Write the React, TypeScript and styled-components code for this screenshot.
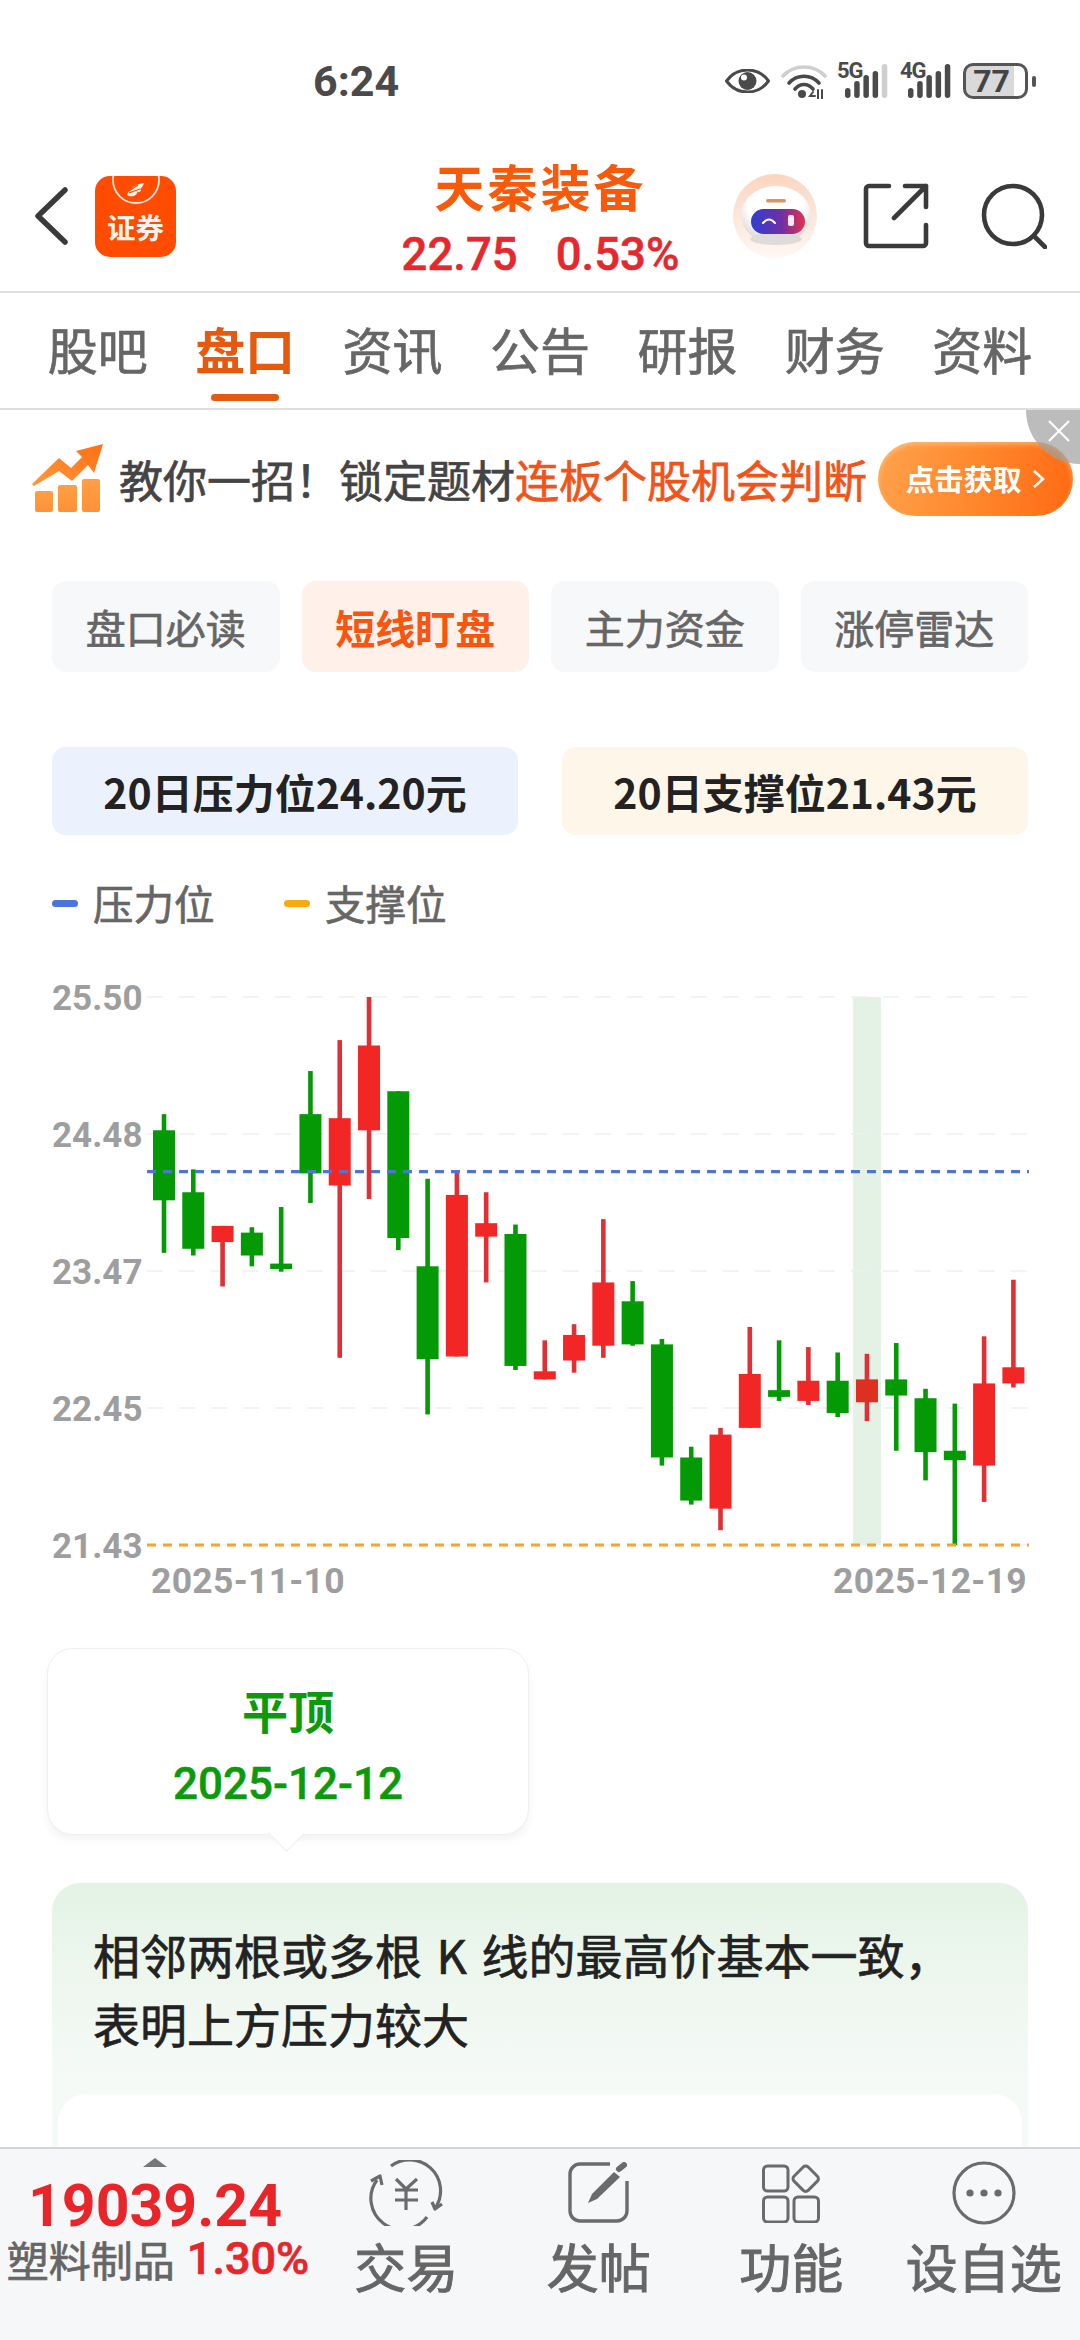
import styled, { createGlobalStyle, css } from "styled-components";

const CJK = `"Noto Sans CJK SC", "Noto Sans", sans-serif`;
const NUM = `Roboto, "Noto Sans CJK SC", sans-serif`;

// the CJK family only ships regular and bold, this thickens regular a little
const medium = css`
  font-weight: 400;
  -webkit-text-stroke: 0.7px currentColor;
`;

const GlobalStyle = createGlobalStyle`
  html, body {
    margin: 0;
    padding: 0;
    background: #fff;
    font-family: ${CJK};
  }
  * {
    box-sizing: border-box;
  }
`;

const Page = styled.div`
  width: 1080px;
  height: 2340px;
  display: flex;
  flex-direction: column;
  overflow: hidden;
  background: #fff;
`;
const StatusBar = styled.div`
  height: 130px;
  flex: none;
  padding: 62px 44px 0 313px;
  display: flex;
  justify-content: space-between;
  align-items: flex-start;
`;
const Time = styled.span`
  font: 700 43px/38px ${NUM};
  color: #4a4a4a;
`;
const StatusIcons = styled.div`
  display: flex;
  align-items: center;
  height: 38px;
`;
const WifiSlot = styled.div`
  margin-left: 11px;
  display: flex;
`;
const NetBlock = styled.div<{ $gap: number }>`
  margin-left: ${(p) => p.$gap}px;
  position: relative;
  display: flex;
`;
const NetLabel = styled.span`
  position: absolute;
  left: -8px;
  top: -3px;
  font: 700 22px/20px ${NUM};
  letter-spacing: -1px;
  color: #4a4a4a;
`;
const Battery = styled.div`
  width: 65px;
  height: 36px;
  margin-left: 12px;
  border: 3.5px solid #555;
  border-radius: 10px;
  background: linear-gradient(90deg, #d9d9d9 82%, #fff 82%);
  display: flex;
  align-items: center;
  justify-content: center;
  padding-right: 8px;
  font: 700 32px/1 ${NUM};
  color: #444;
`;
const BatteryNub = styled.div`
  width: 4px;
  height: 11px;
  margin-left: 4px;
  border-radius: 2px;
  background: #555;
`;

const Header = styled.header`
  height: 163px;
  flex: none;
  padding: 11px 33px 0 34px;
  border-bottom: 2px solid #dedede;
  display: grid;
  grid-template-columns: 1fr auto 1fr;
  align-items: center;
`;
const HeaderLeft = styled.div`
  display: flex;
  align-items: center;
  gap: 26px;
`;
const HeaderRight = styled.div`
  display: flex;
  align-items: center;
  justify-content: flex-end;
`;
const ShareButton = styled.svg`
  margin-left: 46px;
`;
const SearchButton = styled.svg`
  margin-left: 52px;
`;
const TitleBlock = styled.div`
  margin-top: 2px;
  display: flex;
  flex-direction: column;
  align-items: center;
  gap: 15px;
`;
const StockName = styled.div`
  font: 700 50px/60px ${CJK};
  letter-spacing: 3px;
  color: #f85a0c;
`;
const Quote = styled.div`
  display: flex;
  gap: 38px;
  font: 500 45.5px/50px ${NUM};
  -webkit-text-stroke: 0.5px currentColor;
  color: #e5282d;
`;

const Tabs = styled.nav`
  height: 117px;
  flex: none;
  padding: 0 24px 6px;
  border-bottom: 2px solid #dedede;
  display: flex;
`;
const Tab = styled.div<{ $active?: boolean }>`
  flex: 1;
  position: relative;
  display: flex;
  align-items: center;
  justify-content: center;
  font: 400 50px/1 ${CJK};
  ${(p) =>
    p.$active
      ? css`
          font-weight: 700;
          color: #e55a0f;
          &::after {
            content: "";
            position: absolute;
            left: 40px;
            right: 40px;
            bottom: 1px;
            height: 7px;
            border-radius: 4px;
            background: #e55a10;
          }
        `
      : css`
          ${medium}
          color: #666;
        `}
`;

const Content = styled.main`
  flex: 1;
  min-height: 0;
  overflow: hidden;
`;
const Banner = styled.div`
  height: 130px;
  position: relative;
  padding: 7px 7px 0 31px;
  display: flex;
  align-items: center;
`;
const BannerText = styled.div`
  margin-left: 15px;
  white-space: nowrap;
  font: 400 44px/1 ${CJK};
  ${medium}
  color: #444;
`;
const BannerHot = styled.span`
  color: #f0541a;
`;
const BannerButton = styled.div`
  margin-left: auto;
  width: 195px;
  height: 74px;
  border-radius: 37px;
  display: flex;
  align-items: center;
  justify-content: center;
  gap: 10px;
  font: 700 29px/1 ${CJK};
  color: #fff;
  background: linear-gradient(100deg, #ffa24c 0%, #ff8a30 45%, #ff6a12 100%);
  box-shadow: inset 0 3px 5px rgba(255, 210, 150, 0.55);
`;
const CloseCorner = styled.div`
  position: absolute;
  top: 0;
  right: 0;
  width: 54px;
  height: 54px;
  border-bottom-left-radius: 54px;
  background: rgba(160, 160, 160, 0.7);
  display: flex;
  align-items: flex-start;
  justify-content: flex-end;
  padding: 9px 9px 0 0;
`;

const ModeRow = styled.div`
  margin: 41px 52px 0;
  display: grid;
  grid-template-columns: repeat(4, 1fr);
  gap: 22px;
`;
const ModeChip = styled.div<{ $active?: boolean }>`
  height: 91px;
  border-radius: 14px;
  display: flex;
  align-items: center;
  justify-content: center;
  font: 400 40px/1 ${CJK};
  ${(p) =>
    p.$active
      ? css`
          font-weight: 700;
          color: #f8550f;
          background: #fff0ea;
        `
      : css`
          ${medium}
          color: #666;
          background: #f7f8fa;
        `}
`;
const LevelRow = styled.div`
  margin: 75px 52px 0;
  display: grid;
  grid-template-columns: 1fr 1fr;
  gap: 44px;
`;
const LevelCard = styled.div<{ $bg: string }>`
  height: 88px;
  border-radius: 14px;
  display: flex;
  align-items: center;
  justify-content: center;
  font: 700 41px/1 ${CJK};
  color: #222;
  background: ${(p) => p.$bg};
`;
const Legend = styled.div`
  margin: 44px 52px 0;
  height: 48px;
  display: flex;
  align-items: center;
`;
const LegendItem = styled.div`
  display: flex;
  align-items: center;
  gap: 15px;
  width: 232px;
  font: 400 40.5px/1 ${CJK};
  ${medium}
  color: #666;
`;
const Swatch = styled.i<{ $color: string }>`
  width: 26px;
  height: 7px;
  border-radius: 4px;
  background: ${(p) => p.$color};
`;
const ChartBox = styled.svg`
  display: block;
  margin-top: 33px;
`;

const PatternTip = styled.div`
  position: relative;
  width: 482px;
  height: 187px;
  margin: 28px 0 0 47px;
  border: 1.5px solid #efefef;
  border-radius: 26px;
  background: #fff;
  box-shadow: 0 5px 10px rgba(0, 0, 0, 0.05);
  display: flex;
  flex-direction: column;
  align-items: center;
  color: #0a9a0a;
  &::after {
    content: "";
    position: absolute;
    left: 225px;
    bottom: -13px;
    width: 26px;
    height: 26px;
    background: #fff;
    border-right: 1.5px solid #efefef;
    border-bottom: 1.5px solid #efefef;
    transform: rotate(45deg) scale(0.95, 0.95);
  }
`;
const PatternName = styled.div`
  margin-top: 34px;
  font: 700 46px/52px ${CJK};
`;
const PatternDate = styled.div`
  margin-top: 27px;
  font: 500 44px/44px ${NUM};
  -webkit-text-stroke: 0.5px currentColor;
`;
const ExplainCard = styled.section`
  margin: 48px 52px 0;
  height: 400px;
  padding: 36px 6px 0;
  border-radius: 28px;
  background: linear-gradient(180deg, #e4f3e5 0%, #eef7ef 25%, #f6faf7 52%, #f6faf7 100%);
`;
const ExplainText = styled.p`
  margin: 0;
  padding-left: 35px;
  font: 400 47px/69px ${CJK};
  word-spacing: 4px;
  ${medium}
  color: #222;
`;
const WhitePanel = styled.div`
  height: 200px;
  margin-top: 37px;
  border-radius: 28px;
  background: #fff;
`;

const Footer = styled.footer`
  height: 193px;
  flex: none;
  border-top: 2px solid #d4d4d4;
  background: #f6f7f9;
  display: grid;
  grid-template-columns: 310px repeat(4, 1fr);
`;
const IndexBlock = styled.div`
  padding-top: 9px;
  display: flex;
  flex-direction: column;
  align-items: center;
`;
const Caret = styled.div`
  width: 0;
  height: 0;
  border-left: 12px solid transparent;
  border-right: 12px solid transparent;
  border-bottom: 9px solid #777;
`;
const IndexPrice = styled.div`
  margin-top: 12px;
  font: 700 59px/54px ${NUM};
  color: #e8262a;
`;
const IndexRow = styled.div`
  margin: 2px 0 0 6px;
  display: flex;
  align-items: center;
  gap: 12px;
  white-space: nowrap;
  font: 400 42px/48px ${CJK};
  ${medium}
  color: #666;
`;
const IndexChange = styled.span`
  font: 500 45px/48px ${NUM};
  color: #e8262a;
`;
const NavItem = styled.div`
  padding-top: 11px;
  display: flex;
  flex-direction: column;
  align-items: center;
  color: #666;
`;
const NavIcon = styled.div`
  height: 66px;
  display: flex;
  align-items: center;
`;
const NavLabel = styled.div`
  margin-top: 11px;
  white-space: nowrap;
  font: 400 52px/58px ${CJK};
  -webkit-text-stroke: 1px currentColor;
`;

type Candle = [number, number, number, number];

// open, close, high, low; up days have close above open
const candles: Candle[] = [
  [24.51, 23.99, 24.63, 23.6],
  [24.05, 23.63, 24.22, 23.58],
  [23.68, 23.8, 23.8, 23.35],
  [23.75, 23.58, 23.79, 23.5],
  [23.52, 23.48, 23.94, 23.46],
  [24.63, 24.19, 24.95, 23.97],
  [24.1, 24.6, 25.18, 22.82],
  [24.51, 25.14, 25.5, 24.0],
  [24.8, 23.71, 24.8, 23.62],
  [23.5, 22.81, 24.15, 22.4],
  [22.83, 24.03, 24.2, 22.83],
  [23.72, 23.82, 24.05, 23.38],
  [23.74, 22.76, 23.81, 22.73],
  [22.66, 22.72, 22.95, 22.66],
  [22.8, 22.99, 23.07, 22.71],
  [22.91, 23.38, 23.85, 22.82],
  [23.24, 22.92, 23.39, 22.91],
  [22.92, 22.08, 22.96, 22.02],
  [22.08, 21.76, 22.16, 21.73],
  [21.7, 22.25, 22.3, 21.54],
  [22.3, 22.7, 23.05, 22.3],
  [22.58, 22.53, 22.95, 22.5],
  [22.5, 22.65, 22.9, 22.47],
  [22.65, 22.41, 22.86, 22.38],
  [22.49, 22.66, 22.85, 22.35],
  [22.66, 22.54, 22.93, 22.13],
  [22.52, 22.12, 22.59, 21.91],
  [22.13, 22.06, 22.48, 21.43],
  [22.02, 22.63, 22.98, 21.75],
  [22.63, 22.75, 23.4, 22.6],
];

const CHART_TOP = 37;
const CHART_H = 548;
const priceY = (p: number) => CHART_TOP + ((25.5 - p) / 4.07) * CHART_H;
const candleX = (i: number) => 164 + i * 29.29;
const SELECTED = 24;

function KLineChart() {
  const ticks = ["25.50", "24.48", "23.47", "22.45", "21.43"];
  const labelStyle = { font: `700 35px ${NUM}`, fill: "#9e9e9e" };
  const dateStyle = { font: `700 35.5px ${NUM}`, fill: "#9e9e9e", letterSpacing: "0.3px" };
  return (
    <ChartBox width={1080} height={660} viewBox="0 0 1080 660">
      <rect x={853} y={CHART_TOP} width={28} height={CHART_H} fill="#e3f2e4" />
      {ticks.map((t, i) => {
        const y = CHART_TOP + (i * CHART_H) / 4;
        return (
          <g key={t}>
            <line x1={147} x2={1029} y1={y} y2={y} stroke="#f0f0f0" strokeWidth={1.5} strokeDasharray="16 16" />
            <text x={52} y={y + 13} style={labelStyle}>
              {t}
            </text>
          </g>
        );
      })}
      {candles.map(([open, close, high, low], i) => {
        const up = close >= open;
        let color = up ? "#f32626" : "#049a06";
        let wick = up ? "#e03033" : "#049a06";
        if (i === SELECTED) {
          color = "#dc3020";
          wick = "#e03033";
        }
        const x = candleX(i);
        const top = priceY(Math.max(open, close));
        const bottom = priceY(Math.min(open, close));
        return (
          <g key={i}>
            <rect x={x - 2.3} y={priceY(high)} width={4.6} height={priceY(low) - priceY(high)} fill={wick} />
            <rect x={x - 11} y={top} width={22} height={bottom - top} fill={color} />
          </g>
        );
      })}
      <line x1={147} x2={1029} y1={211.7} y2={211.7} stroke="#4f74d8" strokeWidth={3.2} strokeDasharray="9 7" />
      <line x1={147} x2={1029} y1={585} y2={585} stroke="#eba82c" strokeWidth={3.2} strokeDasharray="9 7" />
      <text x={151} y={633} style={dateStyle}>
        2025-11-10
      </text>
      <text x={1027} y={633} textAnchor="end" style={dateStyle}>
        2025-12-19
      </text>
    </ChartBox>
  );
}

function SignalBars({ dimLast }: { dimLast?: boolean }) {
  const heights = [10, 17, 23, 27, 34];
  return (
    <svg width={43} height={34} viewBox="0 0 43 34">
      {heights.map((h, i) => (
        <rect
          key={i}
          x={i * 9.2}
          y={34 - h}
          width={5.5}
          height={h}
          rx={2.7}
          fill={dimLast && i === 4 ? "#cfcfcf" : "#4a4a4a"}
        />
      ))}
    </svg>
  );
}

function BrokerLogo() {
  return (
    <svg width={81} height={81} viewBox="0 0 81 81">
      <defs>
        <clipPath id="logo-clip">
          <rect width={81} height={81} rx={15} />
        </clipPath>
      </defs>
      <g clipPath="url(#logo-clip)">
        <rect width={81} height={81} fill="#ff4c00" />
        <circle cx={41} cy={4} r={23} fill="none" stroke="#fff" strokeOpacity={0.85} strokeWidth={1.8} />
        {/* wing mark, three feathers */}
        <path d="M32 19 C35 12 41 8 49 7 C48 10 47 12 45 13 C47 14 45 17 42 16 C43 19 36 22 32 19 Z" fill="#fff" opacity={0.92} />
        <path d="M34 17 L45 13 M34 15 L43 9" stroke="#ff4c00" strokeWidth={1.2} />
      </g>
      <text x={40.5} y={63} textAnchor="middle" fontSize={28.5} fontWeight={700} fontFamily={CJK} fill="#fff" fillOpacity={0.95}>
        证券
      </text>
    </svg>
  );
}

function RobotAvatar() {
  return (
    <svg width={84} height={84} viewBox="0 0 84 84">
      <defs>
        <linearGradient id="halo" x1="0" y1="0" x2="0" y2="1">
          <stop offset="0" stopColor="#fbd5bf" />
          <stop offset="1" stopColor="#fff8f4" />
        </linearGradient>
        <linearGradient id="visor" x1="0" y1="0" x2="1" y2="0">
          <stop offset="0" stopColor="#2f3fd0" />
          <stop offset="0.55" stopColor="#6d2fa8" />
          <stop offset="1" stopColor="#e4304a" />
        </linearGradient>
        <radialGradient id="fur" cx="0.5" cy="0.35" r="0.65">
          <stop offset="0.6" stopColor="#ffffff" />
          <stop offset="1" stopColor="#d9d6d4" />
        </radialGradient>
        <filter id="soft">
          <feGaussianBlur stdDeviation="0.7" />
        </filter>
      </defs>
      <circle cx={42} cy={42} r={42} fill="url(#halo)" />
      <g filter="url(#soft)">
        <path d="M7 18 C11 24 15 26 20 24 L14 32 Z M76 14 C73 21 69 25 64 24 L71 32 Z" fill="#e9e4e0" />
        <ellipse cx={43} cy={41} rx={35} ry={29} fill="url(#fur)" />
        <ellipse cx={43} cy={65} rx={26} ry={6} fill="#dfdbd8" />
        <rect x={33} y={25} width={20} height={3.5} rx={1.7} fill="#d9935c" />
        <rect x={18} y={35} width={54} height={25} rx={12.5} fill="url(#visor)" />
      </g>
      <path d="M30 49 Q36 42 42 49" fill="none" stroke="#fff" strokeWidth={2} strokeLinecap="round" />
      <rect x={55} y={41} width={6} height={11} rx={2} fill="#fff" fillOpacity={0.9} />
    </svg>
  );
}

function GrowthIcon() {
  return (
    <svg width={73} height={70} viewBox="0 0 73 70">
      <defs>
        <linearGradient id="growth-bar" x1="0" y1="0" x2="0" y2="1">
          <stop offset="0" stopColor="#ff9f45" />
          <stop offset="1" stopColor="#ff9136" />
        </linearGradient>
        <linearGradient id="growth-arrow" x1="0" y1="1" x2="1" y2="0">
          <stop offset="0" stopColor="#ff9a3f" />
          <stop offset="1" stopColor="#ff6f12" />
        </linearGradient>
      </defs>
      <rect x={4} y={47} width={18} height={21} rx={2} fill="url(#growth-bar)" />
      <rect x={27} y={41} width={19} height={27} rx={2} fill="url(#growth-bar)" />
      <rect x={51} y={35} width={18} height={33} rx={2} fill="url(#growth-bar)" />
      <path
        d="M1 40 L28 14 L40 24 L51 13 L45 7 L72 0 L63 29 L57 21 L41 37 L28 27 L3 42 Z"
        fill="url(#growth-arrow)"
        strokeLinejoin="round"
      />
    </svg>
  );
}

function ExchangeIcon() {
  return (
    <svg width={75} height={66} viewBox="0 0 75 66" fill="none" stroke="#6b6b6b" strokeWidth={3.2}>
      <path d="M22 6 A31 31 0 0 1 67 47" />
      <path d="M58 57 A31 31 0 0 1 8 20" />
      <path d="M63 42 L66 49 L73 44" strokeLinejoin="round" />
      <path d="M2 21 L11 16 L13 25" strokeLinejoin="round" />
      <path d="M27 19 L37 29 L48 19 M26 30 H49 M26 40 H49 M37 29 V50" />
    </svg>
  );
}

function PostIcon() {
  return (
    <svg width={62} height={62} viewBox="0 0 62 62" fill="none" stroke="#6b6b6b" strokeWidth={3.4}>
      <path d="M42 2 H12 A10 10 0 0 0 2 12 V49 A10 10 0 0 0 12 59 H49 A10 10 0 0 0 59 49 V19" />
      <path d="M20 41 L24 32 L46 10 L52 15 L29 37 Z" fill="#6b6b6b" stroke="none" />
      <path d="M51 7 L56 3" strokeWidth={6} strokeLinecap="round" />
    </svg>
  );
}

function ToolsIcon() {
  return (
    <svg width={58} height={60} viewBox="0 0 58 60" fill="none" stroke="#6b6b6b" strokeWidth={3}>
      <rect x={1.5} y={3} width={24.5} height={25} rx={4} />
      <rect x={1.5} y={34} width={24.5} height={25} rx={4} />
      <rect x={32} y={34} width={24.5} height={25} rx={4} />
      <rect x={33.7} y={5.7} width={20} height={20} rx={3.5} transform="rotate(45 43.7 15.7)" />
    </svg>
  );
}

function MoreIcon() {
  return (
    <svg width={64} height={64} viewBox="0 0 64 64">
      <circle cx={32} cy={32} r={30} fill="none" stroke="#6b6b6b" strokeWidth={3.2} />
      <circle cx={18} cy={32} r={3.6} fill="#6b6b6b" />
      <circle cx={32} cy={32} r={3.6} fill="#6b6b6b" />
      <circle cx={46} cy={32} r={3.6} fill="#6b6b6b" />
    </svg>
  );
}

function WifiIcon() {
  return (
    <svg width={46} height={36} viewBox="0 0 46 36" fill="none" strokeLinecap="round">
      <path d="M2 13 C13 1 33 1 44 13" stroke="#cfcfcf" strokeWidth={3.6} />
      <path d="M8 20 C16 11 30 11 38 20" stroke="#4a4a4a" strokeWidth={3.6} />
      <path d="M14 26 C19 20 27 20 32 26" stroke="#4a4a4a" strokeWidth={3.6} />
      <circle cx={21} cy={31} r={4} fill="#4a4a4a" />
      <path d="M32 29 L29 33 H34 M37 27 V36 M41 27 V36" stroke="#4a4a4a" strokeWidth={2} />
    </svg>
  );
}

export default function App() {
  return (
    <Page>
      <GlobalStyle />
      <StatusBar>
        <Time>6:24</Time>
        <StatusIcons>
          <svg width={45} height={24} viewBox="0 0 45 24">
            <path d="M1.5 12 C8 3 15 1 22.5 1 C30 1 37 3 43.5 12 C37 21 30 23 22.5 23 C15 23 8 21 1.5 12 Z" fill="none" stroke="#4a4a4a" strokeWidth={3} />
            <circle cx={22.5} cy={12} r={9} fill="#4a4a4a" />
            <circle cx={19} cy={8.5} r={3} fill="#fff" />
          </svg>
          <WifiSlot>
            <WifiIcon />
          </WifiSlot>
          <NetBlock $gap={18}>
            <NetLabel>5G</NetLabel>
            <SignalBars dimLast />
          </NetBlock>
          <NetBlock $gap={20}>
            <NetLabel>4G</NetLabel>
            <SignalBars />
          </NetBlock>
          <Battery>77</Battery>
          <BatteryNub />
        </StatusIcons>
      </StatusBar>

      <Header>
        <HeaderLeft>
          <svg width={35} height={60} viewBox="0 0 35 60" fill="none">
            <path d="M31 4 L4 30 L31 56" stroke="#3a3a3a" strokeWidth={5.5} strokeLinecap="round" strokeLinejoin="round" />
          </svg>
          <BrokerLogo />
        </HeaderLeft>
        <TitleBlock>
          <StockName>天秦装备</StockName>
          <Quote>
            <span>22.75</span>
            <span>0.53%</span>
          </Quote>
        </TitleBlock>
        <HeaderRight>
          <RobotAvatar />
          <ShareButton width={66} height={66} viewBox="0 0 66 66" fill="none" stroke="#3a3a3a" strokeWidth={4.6} strokeLinecap="round" strokeLinejoin="round">
            <path d="M26 3 H6 A3 3 0 0 0 3 6 V60 A3 3 0 0 0 6 63 H60 A3 3 0 0 0 63 60 V42" />
            <path d="M42 3 H63 V24 M63 3 L31 35" />
          </ShareButton>
          <SearchButton width={66} height={66} viewBox="0 0 66 66" fill="none" stroke="#3a3a3a" strokeWidth={4.6} strokeLinecap="round">
            <circle cx={32} cy={32} r={29} />
            <path d="M53 53 L64 64" />
          </SearchButton>
        </HeaderRight>
      </Header>

      <Tabs>
        <Tab>股吧</Tab>
        <Tab $active>盘口</Tab>
        <Tab>资讯</Tab>
        <Tab>公告</Tab>
        <Tab>研报</Tab>
        <Tab>财务</Tab>
        <Tab>资料</Tab>
      </Tabs>

      <Content>
        <Banner>
          <GrowthIcon />
          <BannerText>
            教你一招！锁定题材<BannerHot>连板个股机会判断</BannerHot>
          </BannerText>
          <BannerButton>
            点击获取
            <svg width={14} height={20} viewBox="0 0 14 20" fill="none">
              <path d="M2 2 L11 10 L2 18" stroke="#fff" strokeWidth={2.6} />
            </svg>
          </BannerButton>
          <CloseCorner>
            <svg width={24} height={24} viewBox="0 0 24 24">
              <path d="M2 2 L22 22 M22 2 L2 22" stroke="#fff" strokeWidth={2.2} />
            </svg>
          </CloseCorner>
        </Banner>

        <ModeRow>
          <ModeChip>盘口必读</ModeChip>
          <ModeChip $active>短线盯盘</ModeChip>
          <ModeChip>主力资金</ModeChip>
          <ModeChip>涨停雷达</ModeChip>
        </ModeRow>

        <LevelRow>
          <LevelCard $bg="#ecf2fd">20日压力位24.20元</LevelCard>
          <LevelCard $bg="#fef6e9">20日支撑位21.43元</LevelCard>
        </LevelRow>

        <Legend>
          <LegendItem>
            <Swatch $color="#4a74e0" />
            压力位
          </LegendItem>
          <LegendItem>
            <Swatch $color="#f8ab0d" />
            支撑位
          </LegendItem>
        </Legend>

        <KLineChart />

        <PatternTip>
          <PatternName>平顶</PatternName>
          <PatternDate>2025-12-12</PatternDate>
        </PatternTip>

        <ExplainCard>
          <ExplainText>
            相邻两根或多根 K 线的最高价基本一致，
            <br />
            表明上方压力较大
          </ExplainText>
          <WhitePanel />
        </ExplainCard>
      </Content>

      <Footer>
        <IndexBlock>
          <Caret />
          <IndexPrice>19039.24</IndexPrice>
          <IndexRow>
            塑料制品
            <IndexChange>1.30%</IndexChange>
          </IndexRow>
        </IndexBlock>
        <NavItem>
          <NavIcon>
            <ExchangeIcon />
          </NavIcon>
          <NavLabel>交易</NavLabel>
        </NavItem>
        <NavItem>
          <NavIcon>
            <PostIcon />
          </NavIcon>
          <NavLabel>发帖</NavLabel>
        </NavItem>
        <NavItem>
          <NavIcon>
            <ToolsIcon />
          </NavIcon>
          <NavLabel>功能</NavLabel>
        </NavItem>
        <NavItem>
          <NavIcon>
            <MoreIcon />
          </NavIcon>
          <NavLabel>设自选</NavLabel>
        </NavItem>
      </Footer>
    </Page>
  );
}
